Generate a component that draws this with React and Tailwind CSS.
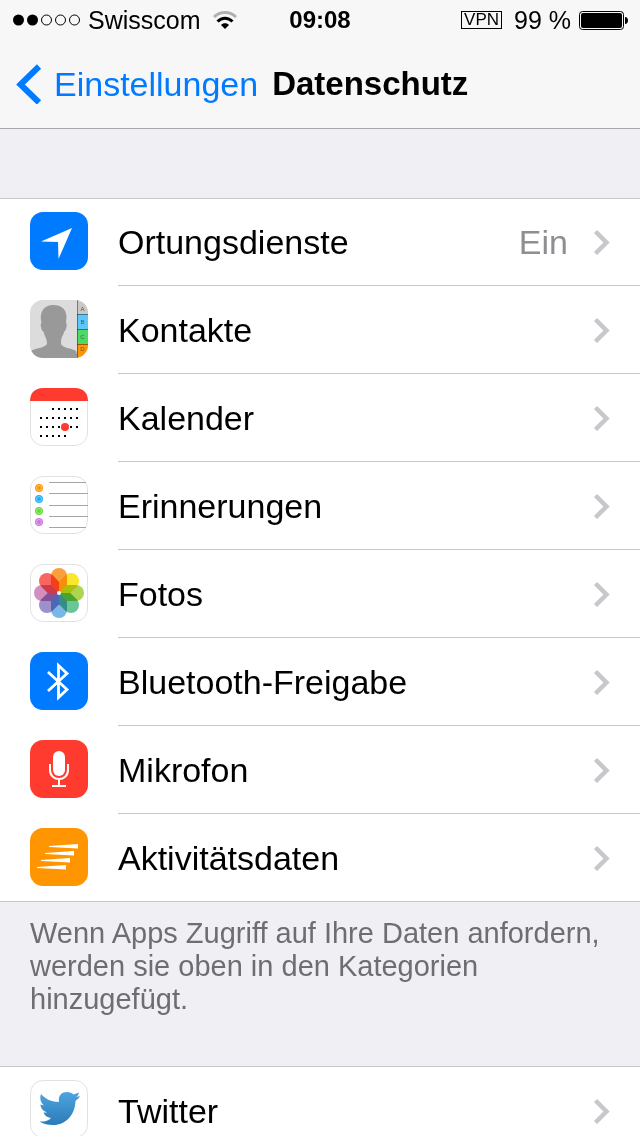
import React from "react";

/* ================= ICONS ================= */

const LocationIcon = () => (
  <svg viewBox="0 0 58 58" className="h-full w-full">
    <rect width="58" height="58" rx="13" fill="#007aff" />
    <path d="M42 16 L28.5 47 L28 30 L11 29.5 Z" fill="#fff" />
  </svg>
);

const ContactsIcon = () => (
  <svg viewBox="0 0 58 58" className="h-full w-full">
    <defs>
      <clipPath id="contacts-clip">
        <rect width="58" height="58" rx="13" />
      </clipPath>
    </defs>
    <g clipPath="url(#contacts-clip)">
      <rect width="58" height="58" fill="#dcdcdc" />
      <path
        d="M23.5 5 C31 5 36.5 9 36.5 17 L36 23 C37.5 23 36.5 29 35 31 C34 31 34 33 33 35 C31 38 31 40 31 44 C32 48 42 48 46 51 L48 58 H0 L1 51 C5 48 15 48 17 44 C17 40 16 38 14.5 35 C14 33 13.5 31 12.5 31 C11 29 10 23 11.5 23 C9 13 13 5 23.5 5 Z"
        fill="#999"
      />
      <rect x="47" width="11" height="14" fill="#c9c8c3" />
      <rect x="47" y="14" width="11" height="15" fill="#5ac8fa" />
      <rect x="47" y="29" width="11" height="15" fill="#4cd964" />
      <rect x="47" y="44" width="11" height="14" fill="#ff9500" />
      <path d="M47.5 0 V58 M47 14.5 H58 M47 29.5 H58 M47 44.5 H58" stroke="#000" strokeOpacity="0.4" />
      <g fontFamily="Liberation Sans, sans-serif" fontSize="6" textAnchor="middle" fill="#555">
        <text x="52.5" y="11">A</text>
        <text x="52.5" y="24">B</text>
        <text x="52.5" y="39">C</text>
        <text x="52.5" y="51">D</text>
      </g>
    </g>
  </svg>
);

const calendarDots = [
  { y: 21, from: 2, to: 6 },
  { y: 30, from: 0, to: 6 },
  { y: 39, from: 0, to: 6 },
  { y: 48, from: 0, to: 4 },
];

const CalendarIcon = () => (
  <svg viewBox="0 0 58 58" className="h-full w-full">
    <rect x="0.5" y="0.5" width="57" height="57" rx="12.5" fill="#fff" stroke="#e2e2e2" />
    <path d="M0 13 C0 5 5 0 13 0 H45 C53 0 58 5 58 13 Z" fill="#ff3b30" />
    {calendarDots.map((row) =>
      [0, 1, 2, 3, 4, 5, 6]
        .filter((col) => col >= row.from && col <= row.to)
        .map((col) => (
          <rect key={`${row.y}-${col}`} x={10 + col * 6} y={row.y - 1} width="2" height="2" />
        ))
    )}
    <circle cx="35" cy="39" r="4" fill="#ff3b30" />
  </svg>
);

const reminders = [
  { y: 12, color: "#ff9500" },
  { y: 23, color: "#1badf8" },
  { y: 35, color: "#63da38" },
  { y: 46, color: "#cc73e1" },
];

const RemindersIcon = () => (
  <svg viewBox="0 0 58 58" className="h-full w-full">
    <rect x="0.5" y="0.5" width="57" height="57" rx="12.5" fill="#fff" stroke="#e2e2e2" />
    {reminders.map((r) => (
      <g key={r.y} fill={r.color}>
        <circle cx="9" cy={r.y} r="4" fillOpacity="0.6" />
        <circle cx="9" cy={r.y} r="3.5" fill="none" stroke={r.color} />
        <circle cx="9" cy={r.y} r="2" />
      </g>
    ))}
    <path d="M19 6.5 H56 M19 17.5 H58 M19 29.5 H58 M19 40.5 H58 M19 51.5 H56" stroke="#a5a5a5" />
  </svg>
);

const petals = [
  "#fa9f3c",
  "#fae62a",
  "#aed551",
  "#6cc596",
  "#79b8e6",
  "#9d90cb",
  "#d48fc0",
  "#f9665f",
];

const PhotosIcon = () => (
  <svg viewBox="0 0 58 58" className="h-full w-full">
    <rect x="0.5" y="0.5" width="57" height="57" rx="12.5" fill="#fff" stroke="#e2e2e2" />
    {petals.map((color, i) => (
      <path
        key={color}
        d="M29 29 L21 21 V12 A8 8 0 0 1 37 12 V21 Z"
        fill={color}
        className="mix-blend-multiply"
        transform={`rotate(${i * 45} 29 29)`}
      />
    ))}
    <circle cx="29" cy="29" r="2" fill="#fff" />
  </svg>
);

const BluetoothIcon = () => (
  <svg viewBox="0 0 58 58" className="h-full w-full">
    <rect width="58" height="58" rx="13" fill="#007aff" />
    <path
      d="M18 20 L37 37.5 L28.5 45.5 V13.5 L37 21.5 L18 39"
      fill="none"
      stroke="#fff"
      strokeWidth="2.8"
    />
  </svg>
);

const MicrophoneIcon = () => (
  <svg viewBox="0 0 58 58" className="h-full w-full">
    <rect width="58" height="58" rx="13" fill="#ff3b30" />
    <rect x="23" y="11" width="12" height="25" rx="6" fill="#fff" />
    <path
      d="M20 24 V30 C20 42 38 42 38 30 V24 M29 39 V46 M22 46 H36"
      fill="none"
      stroke="#fff"
      strokeWidth="2"
    />
  </svg>
);

const ActivityIcon = () => (
  <svg viewBox="0 0 58 58" className="h-full w-full">
    <rect width="58" height="58" rx="13" fill="#ff9500" />
    <path
      d="M19 18 L48 16 V20.5 L19 19 Z M15 25 L44 23 V27.5 L15 26 Z M11 32 L40 30 V34.5 L11 33 Z M7 39 L36 37 V41.5 L7 40 Z"
      fill="#fff"
    />
  </svg>
);

const TwitterIcon = () => (
  <svg viewBox="0 0 58 58" className="h-full w-full">
    <defs>
      <linearGradient id="twitter-blue" x1="0" y1="0" x2="0" y2="1">
        <stop offset="0" stopColor="#4ea5e0" />
        <stop offset="1" stopColor="#2b7bb9" />
      </linearGradient>
    </defs>
    <rect x="0.5" y="0.5" width="57" height="57" rx="12.5" fill="#fff" stroke="#e2e2e2" />
    <path
      d="M11 14 C15 19 22 22 29 22 C28 15 32 12 37 12 C40 12 42 13 43.5 14.5 L49 12.5 C48.5 14.5 47.5 16 46 17 L50 16 C49 18 47.5 19.5 45.5 21 C45 35 36 45 23 45 C18 45 13 44 9.5 41.5 C14 42 18 41 21 38 C17 37.5 14.5 35.5 13.5 32.5 L17 32.5 C13 31 10.5 28 10.5 24.5 L14 25.5 C10.5 22.5 9.5 18 11 14 Z"
      fill="url(#twitter-blue)"
    />
  </svg>
);

const Chevron = () => (
  <svg viewBox="0 0 18 26" className="h-[26px] w-[18px] shrink-0" aria-hidden="true">
    <path d="M3.5 2.5 L14.5 13.5 L3.5 24.5" fill="none" stroke="#c7c7cc" strokeWidth="4.5" />
  </svg>
);

/* ================= LIST ================= */

const items = [
  { label: "Ortungsdienste", value: "Ein", Icon: LocationIcon },
  { label: "Kontakte", Icon: ContactsIcon },
  { label: "Kalender", Icon: CalendarIcon },
  { label: "Erinnerungen", Icon: RemindersIcon },
  { label: "Fotos", Icon: PhotosIcon },
  { label: "Bluetooth-Freigabe", Icon: BluetoothIcon },
  { label: "Mikrofon", Icon: MicrophoneIcon },
  { label: "Aktivitätsdaten", Icon: ActivityIcon },
];

const socialItems = [{ label: "Twitter", Icon: TwitterIcon }];

const SettingsList = ({ items }) => (
  <ul className="border-y border-[#c8c7cc] bg-white">
    {items.map(({ label, value, Icon }) => (
      <li key={label} className="group h-[88px] first:h-[87px] last:h-[87px]">
        <a href="#" className="flex h-full items-stretch gap-[30px] pl-[30px]">
          <span className="w-[58px] shrink-0 pt-[14px] group-first:pt-[13px]">
            <span className="block h-[58px] w-[58px]">
              <Icon />
            </span>
          </span>
          <span className="flex flex-1 items-center border-b border-[#c8c7cc] pr-[30px] group-last:border-b-0">
            <span className="flex-1 text-[34px] leading-10">{label}</span>
            {value && <span className="mr-6 text-[34px] leading-10 text-[#8e8e93]">{value}</span>}
            <Chevron />
          </span>
        </a>
      </li>
    ))}
  </ul>
);

/* ================= HEADER ================= */

const StatusBar = () => (
  <div className="grid h-10 grid-cols-[1fr_auto_1fr] items-center px-3 text-[25px] leading-10">
    <div className="flex items-center gap-2">
      <svg viewBox="0 0 68 12" className="h-3 w-[68px]" aria-hidden="true">
        <circle cx="6.5" cy="6" r="5.5" />
        <circle cx="20.5" cy="6" r="5.5" />
        <g fill="none" stroke="#000">
          <circle cx="34.5" cy="6" r="5" />
          <circle cx="48.5" cy="6" r="5" />
          <circle cx="62.5" cy="6" r="5" />
        </g>
      </svg>
      <span>Swisscom</span>
      <svg viewBox="0 0 24 18" className="ml-1 h-[18px] w-6" aria-hidden="true">
        <path d="M1 6 C7 0 17 0 23 6" fill="none" stroke="#b0b0b0" strokeWidth="3" />
        <path d="M4.5 10.5 C9 6 15 6 19.5 10.5" fill="none" stroke="#000" strokeWidth="3" />
        <path d="M8 14 C10 11.5 14 11.5 16 14 L12 18 Z" />
      </svg>
    </div>
    <time className="text-2xl leading-10 font-bold">09:08</time>
    <div className="flex items-center justify-end">
      <span className="mr-3 flex h-[18px] items-center border border-black px-0.5 text-[17px] leading-4">VPN</span>
      <span className="mr-2">99 %</span>
      <svg viewBox="0 0 49 19" className="h-[19px] w-[49px]" aria-hidden="true">
        <rect x="0.5" y="0.5" width="44" height="18" rx="3" fill="none" stroke="#000" />
        <rect x="2" y="2" width="41" height="15" rx="2" />
        <path d="M46 6 C50 6 50 13 46 13 Z" />
      </svg>
    </div>
  </div>
);

const App = () => {
  return (
    <div className="h-screen overflow-hidden bg-[#efeff4] font-['Liberation_Sans',Arial,sans-serif] text-black">
      <header className="border-b border-[#a7a7ac] bg-[#f7f7f7]">
        <StatusBar />
        <nav className="flex h-[88px] items-center gap-3.5 pl-4">
          <a href="#" className="flex items-center gap-3 text-[34px] leading-10 text-[#007aff]">
            <svg viewBox="0 0 26 40" className="h-10 w-[26px]" aria-hidden="true">
              <path d="M23 2.5 L4.5 20.5 L23 38.5" fill="none" stroke="currentColor" strokeWidth="6" />
            </svg>
            Einstellungen
          </a>
          <h1 className="text-[33px] leading-10 font-bold">Datenschutz</h1>
        </nav>
      </header>

      <main className="pt-[69px]">
        <SettingsList items={items} />
        <p className="px-[30px] pt-[15px] pb-[50px] text-[29px] leading-[33px] text-[#6d6d72]">
          Wenn Apps Zugriff auf Ihre Daten anfordern, werden sie oben in den Kategorien hinzugefügt.
        </p>
        <SettingsList items={socialItems} />
      </main>
    </div>
  );
};

export default App;
